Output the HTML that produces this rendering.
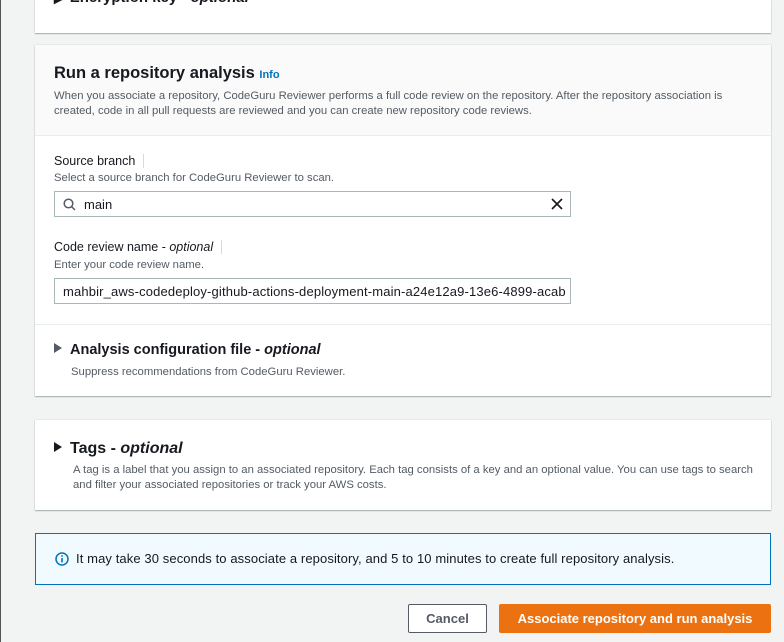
<!DOCTYPE html><html><head><style>
body{margin:0;width:784px;height:642px;background:#f2f3f3;font-family:"Liberation Sans",sans-serif;color:#16191f;position:relative;overflow:hidden}
.lb{position:absolute;left:0;top:0;width:1px;height:642px;background:#555}
.p{position:absolute;left:35px;width:736px;background:#fff;box-shadow:0 1px 1px rgba(0,28,36,.3),0 0 1px rgba(0,28,36,.2)}
.t{position:absolute;white-space:nowrap}
.h{font-weight:bold}
.s{font-size:11.3px;color:#545b64}
.inp{position:absolute;left:54px;width:517px;height:26px;border:1px solid #aab7b8;background:#fff;box-sizing:border-box;font-size:13px}
.tri{display:inline-block;width:0;height:0;border-left:8px solid #16191f;border-top:5px solid transparent;border-bottom:5px solid transparent;margin-right:8px;vertical-align:1px}
</style></head><body>
<div class="lb"></div>
<div class="p" style="top:0;height:33px"></div>
<div class="t h" style="left:54px;top:-12px;font-size:15px">▶ Encryption key - <i>optional</i></div>
<div class="p" style="top:45px;height:351px">
 <div style="height:90px;background:#fafafa;border-bottom:1px solid #eaeded"></div>
 <div style="position:absolute;top:279px;left:0;right:0;border-top:1px solid #eaeded"></div>
</div>
<div class="t h" style="left:54px;top:64px;font-size:16.5px">Run a repository analysis <span style="color:#0073bb;font-size:11px">Info</span></div>
<div class="t s" style="left:54px;top:89px;line-height:15px">When you associate a repository, CodeGuru Reviewer performs a full code review on the repository. After the repository association is<br>created, code in all pull requests are reviewed and you can create new repository code reviews.</div>
<div class="t" style="left:54px;top:154px;font-size:12.5px">Source branch <span style="border-left:1px solid #d5dbdb;margin-left:4px">&nbsp;</span></div>
<div class="t s" style="left:54px;top:172px">Select a source branch for CodeGuru Reviewer to scan.</div>
<div class="inp" style="top:191px">
 <svg style="position:absolute;left:8px;top:6px" width="13" height="13" viewBox="0 0 13 13"><circle cx="5.5" cy="5.5" r="4.3" fill="none" stroke="#545b64" stroke-width="1.5"/><path d="M8.6 8.6L12 12" stroke="#545b64" stroke-width="1.5"/></svg>
 <span style="position:absolute;left:29px;top:5px">main</span>
 <svg style="position:absolute;right:7px;top:6px" width="12" height="12" viewBox="0 0 12 12"><path d="M1 1L11 11M11 1L1 11" stroke="#16191f" stroke-width="1.6"/></svg>
</div>
<div class="t" style="left:54px;top:240px;font-size:12.5px">Code review name - <i>optional</i> <span style="border-left:1px solid #d5dbdb;margin-left:4px">&nbsp;</span></div>
<div class="t s" style="left:54px;top:259px">Enter your code review name.</div>
<div class="inp" style="top:278px;overflow:hidden"><span style="position:absolute;left:8px;top:5px;white-space:nowrap;letter-spacing:.15px">mahbir_aws-codedeploy-github-actions-deployment-main-a24e12a9-13e6-4899-acab</span></div>
<div class="t h" style="left:54px;top:342px;font-size:14.5px;color:#16191f"><span class="tri" style="border-left-color:#545b64"></span>Analysis configuration file - <i>optional</i></div>
<div class="t s" style="left:71px;top:366px">Suppress recommendations from CodeGuru Reviewer.</div>
<div class="p" style="top:420px;height:90px"></div>
<div class="t h" style="left:54px;top:440px;font-size:16px"><span class="tri"></span>Tags - <i>optional</i></div>
<div class="t s" style="left:73px;top:463px;line-height:15px">A tag is a label that you assign to an associated repository. Each tag consists of a key and an optional value. You can use tags to search<br>and filter your associated repositories or track your AWS costs.</div>
<div style="position:absolute;left:35px;top:533px;width:736px;height:52px;box-sizing:border-box;border:1px solid #0073bb;background:#f1faff"></div>
<svg style="position:absolute;left:55px;top:552px" width="14" height="14" viewBox="0 0 14 14"><circle cx="7" cy="7" r="6" fill="none" stroke="#0073bb" stroke-width="1.5"/><path d="M7 6V10.5" stroke="#0073bb" stroke-width="1.6"/><circle cx="7" cy="4" r=".9" fill="#0073bb"/></svg>
<div class="t" style="left:76px;top:551px;font-size:13px;letter-spacing:.1px">It may take 30 seconds to associate a repository, and 5 to 10 minutes to create full repository analysis.</div>
<div style="position:absolute;left:408px;top:604px;width:79px;height:29px;box-sizing:border-box;border:1px solid #545b64;background:#fff;border-radius:2px;font-weight:bold;font-size:13px;color:#545b64;text-align:center;line-height:27px">Cancel</div>
<div style="position:absolute;left:499px;top:604px;width:272px;height:29px;background:#ec7211;border-radius:2px;font-weight:bold;font-size:13px;color:#fff;text-align:center;line-height:29px">Associate repository and run analysis</div>
</body></html>
